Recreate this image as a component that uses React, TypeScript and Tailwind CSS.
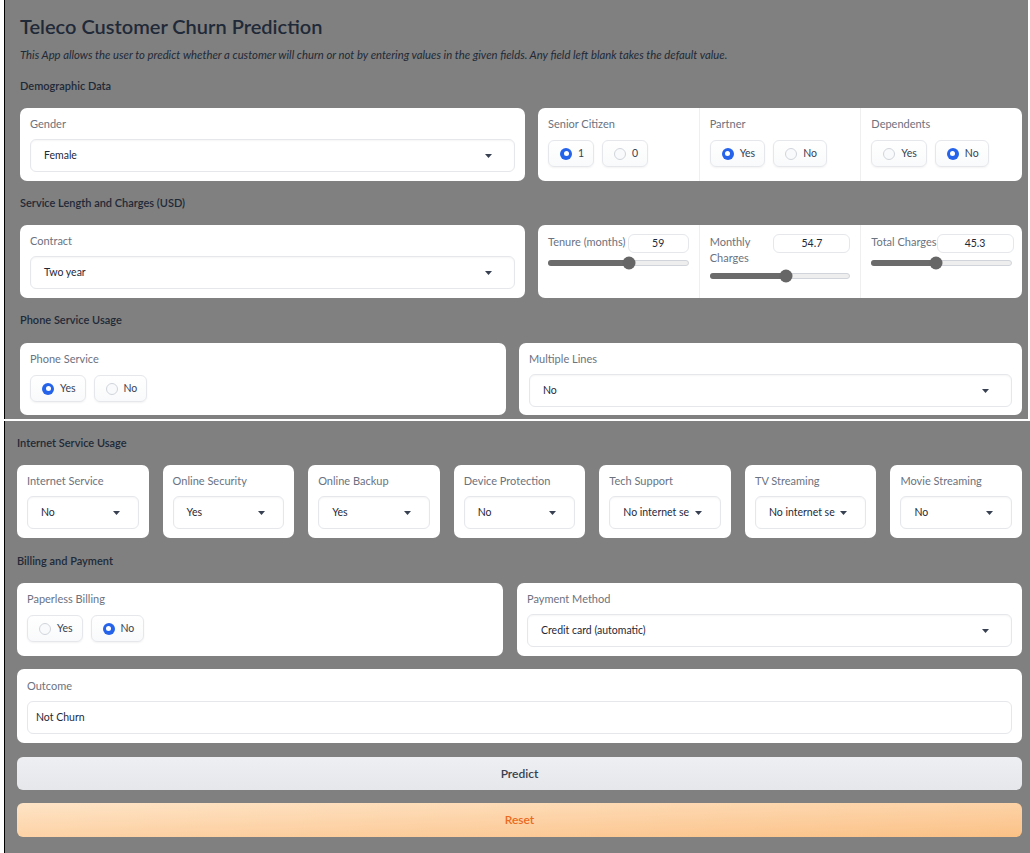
import React from "react";

const FONT = "font-['Lato','Liberation_Sans',sans-serif]";

function Arrow() {
  return (
    <svg width="7" height="4" viewBox="0 0 7 4" className="shrink-0">
      <path d="M0 0 L7 0 L3.5 4 Z" fill="#374151" />
    </svg>
  );
}

function Label({ children }: { children: React.ReactNode }) {
  return <div className="h-[16px] text-[11px] leading-[16px] text-[#6b7280] whitespace-nowrap">{children}</div>;
}

function Dropdown({ value, arrowPad = "pr-[22px] gap-[8px]" }: { value: string; arrowPad?: string }) {
  return (
    <div
      className={`mt-[7px] h-[33px] rounded-[6px] border border-[#e5e7eb] bg-white shadow-[inset_0_1px_2px_rgba(0,0,0,0.04)] flex items-center justify-between pl-[13px] ${arrowPad}`}
    >
      <span className="shrink-0 text-[10.5px] text-[#1f2937] whitespace-nowrap">{value}</span>
      <Arrow />
    </div>
  );
}

function Radio({ label, checked }: { label: string; checked?: boolean }) {
  return (
    <div className="h-[27px] flex items-center gap-[6px] pl-[11px] pr-[9px] rounded-[6px] border border-[#e5e7eb] bg-gradient-to-b from-white to-[#f9fafb] shadow-[0_1px_2px_rgba(0,0,0,0.05)]">
      {checked ? (
        <span className="w-[12px] h-[12px] rounded-full bg-[#2563eb] flex items-center justify-center">
          <span className="w-[5px] h-[5px] rounded-full bg-white" />
        </span>
      ) : (
        <span className="w-[12px] h-[12px] rounded-full border border-[#d1d5db] bg-[#f9fafb]" />
      )}
      <span className="text-[10.5px] text-[#374151]">{label}</span>
    </div>
  );
}

function RadioGroup({ options, selected }: { options: string[]; selected: string }) {
  return (
    <div className="mt-[8px] flex gap-[8px]">
      {options.map((o) => (
        <Radio key={o} label={o} checked={o === selected} />
      ))}
    </div>
  );
}

function Card({ className = "", children }: { className?: string; children: React.ReactNode }) {
  return <div className={`bg-white rounded-[7px] ${className}`}>{children}</div>;
}

function Section({ children, className = "" }: { children: React.ReactNode; className?: string }) {
  return (
    <div className={`h-[14px] text-[11px] leading-[14px] font-semibold text-[#1f2937] ${className}`}>{children}</div>
  );
}

function Slider({ pct }: { pct: number }) {
  return (
    <div className="relative mt-[7px] h-[6px] rounded-full border border-[#d1d5db] bg-[#eeeeee]">
      <div className="absolute left-[-1px] top-[-1px] h-[6px] rounded-full bg-[#6b6b6b]" style={{ width: `${pct}%` }} />
      <div
        className="absolute top-1/2 w-[13px] h-[13px] rounded-full bg-[#666666] -translate-x-1/2 -translate-y-1/2"
        style={{ left: `${pct}%` }}
      />
    </div>
  );
}

function NumBox({ value, w }: { value: string; w: string }) {
  return (
    <div className={`${w} shrink-0 h-[19px] rounded-[6px] border border-[#e5e7eb] bg-white flex items-center justify-center text-[10.5px] text-[#1f2937]`}>
      {value}
    </div>
  );
}

export default function App() {
  return (
    <div className={`w-[1030px] h-[853px] bg-white overflow-hidden ${FONT}`}>
      {/* top screenshot */}
      <div className="ml-[4px] w-[1024px] h-[419px] border-l border-black bg-[#808080] pl-[15px] pr-[6px] pt-[14px]">
        <div className="h-[24px] text-[20px] leading-[24px] font-semibold text-[#1f2937]">
          Teleco Customer Churn Prediction
        </div>
        <div className="mt-[10px] h-[14px] text-[11.3px] leading-[14px] italic text-[#1f2937] whitespace-nowrap">
          This App allows the user to predict whether a customer will churn or not by entering values in the given
          fields. Any field left blank takes the default value.
        </div>
        <Section className="mt-[17px]">Demographic Data</Section>
        <div className="mt-[15px] flex gap-[13px]">
          <Card className="w-[505px] h-[73px] px-[10px] pt-[8px]">
            <Label>Gender</Label>
            <Dropdown value="Female" />
          </Card>
          <Card className="flex-1 min-w-0 h-[73px] flex">
            <div className="flex-1 min-w-0 px-[10px] pt-[8px]">
              <Label>Senior Citizen</Label>
              <RadioGroup options={["1", "0"]} selected="1" />
            </div>
            <div className="flex-1 min-w-0 px-[10px] pt-[8px] border-l border-[#efefef]">
              <Label>Partner</Label>
              <RadioGroup options={["Yes", "No"]} selected="Yes" />
            </div>
            <div className="flex-1 min-w-0 px-[10px] pt-[8px] border-l border-[#efefef]">
              <Label>Dependents</Label>
              <RadioGroup options={["Yes", "No"]} selected="No" />
            </div>
          </Card>
        </div>
        <Section className="mt-[15px]">Service Length and Charges (USD)</Section>
        <div className="mt-[15px] flex gap-[13px]">
          <Card className="w-[505px] h-[73px] px-[10px] pt-[8px]">
            <Label>Contract</Label>
            <Dropdown value="Two year" />
          </Card>
          <Card className="flex-1 min-w-0 h-[73px] flex">
            <div className="flex-1 min-w-0 px-[10px] pt-[9px]">
              <div className="flex items-start justify-between">
                <span className="text-[11px] leading-[16px] text-[#6b7280] whitespace-nowrap">Tenure (months)</span>
                <NumBox value="59" w="w-[61px]" />
              </div>
              <Slider pct={58} />
            </div>
            <div className="flex-1 min-w-0 px-[10px] pt-[9px] border-l border-[#efefef]">
              <div className="flex items-start justify-between">
                <span className="w-[50px] text-[11px] leading-[16px] text-[#6b7280]">Monthly Charges</span>
                <NumBox value="54.7" w="w-[77px]" />
              </div>
              <Slider pct={54} />
            </div>
            <div className="flex-1 min-w-0 px-[10px] pt-[9px] border-l border-[#efefef]">
              <div className="flex items-start justify-between">
                <span className="text-[11px] leading-[16px] text-[#6b7280] whitespace-nowrap">Total Charges</span>
                <NumBox value="45.3" w="w-[77px]" />
              </div>
              <Slider pct={46} />
            </div>
          </Card>
        </div>
        <Section className="mt-[15px]">Phone Service Usage</Section>
        <div className="mt-[16px] flex gap-[13px]">
          <Card className="w-[486px] h-[72px] px-[10px] pt-[8px]">
            <Label>Phone Service</Label>
            <RadioGroup options={["Yes", "No"]} selected="Yes" />
          </Card>
          <Card className="flex-1 min-w-0 h-[72px] px-[10px] pt-[8px]">
            <Label>Multiple Lines</Label>
            <Dropdown value="No" />
          </Card>
        </div>
      </div>
      <div className="h-[2px] bg-white" />
      {/* bottom screenshot */}
      <div className="ml-[4px] w-[1026px] h-[432px] border-l border-black bg-[#808080] pl-[12px] pr-[8px] pt-[15px]">
        <Section>Internet Service Usage</Section>
        <div className="mt-[15px] flex gap-[14px]">
          {[
            ["Internet Service", "No"],
            ["Online Security", "Yes"],
            ["Online Backup", "Yes"],
            ["Device Protection", "No"],
            ["Tech Support", "No internet se"],
            ["TV Streaming", "No internet se"],
            ["Movie Streaming", "No"],
          ].map(([l, v]) => (
            <Card key={l} className="flex-1 basis-0 min-w-0 h-[73px] px-[10px] pt-[8px]">
              <Label>{l}</Label>
              <Dropdown value={v} arrowPad="pr-[18px] gap-[4px]" />
            </Card>
          ))}
        </div>
        <Section className="mt-[16px]">Billing and Payment</Section>
        <div className="mt-[15px] flex gap-[14px]">
          <Card className="w-[486px] h-[73px] px-[10px] pt-[8px]">
            <Label>Paperless Billing</Label>
            <RadioGroup options={["Yes", "No"]} selected="No" />
          </Card>
          <Card className="flex-1 min-w-0 h-[73px] px-[10px] pt-[8px]">
            <Label>Payment Method</Label>
            <Dropdown value="Credit card (automatic)" />
          </Card>
        </div>
        <Card className="mt-[13px] h-[74px] px-[10px] pt-[9px]">
          <Label>Outcome</Label>
          <div className="mt-[7px] h-[33px] rounded-[6px] border border-[#e5e7eb] bg-white flex items-center pl-[8px] text-[10.5px] text-[#1f2937]">
            Not Churn
          </div>
        </Card>
        <div className="mt-[14px] h-[33px] rounded-[6px] bg-gradient-to-b from-[#eeeff2] to-[#e5e7eb] flex items-center justify-center text-[12px] font-semibold text-[#374151]">
          Predict
        </div>
        <div className="mt-[13px] h-[34px] rounded-[6px] bg-gradient-to-br from-[#fee4c6] to-[#fbc186] flex items-center justify-center text-[12px] font-semibold text-[#ea6a1f]">
          Reset
        </div>
      </div>
    </div>
  );
}
